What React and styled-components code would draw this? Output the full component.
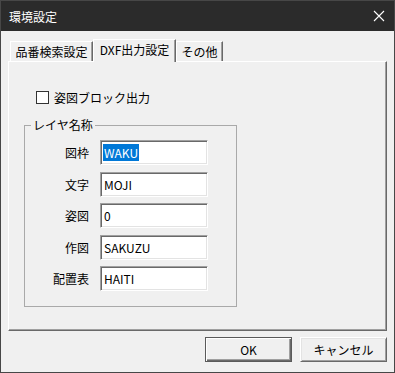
import React from 'react';
import styled, { createGlobalStyle } from 'styled-components';

const GlobalStyle = createGlobalStyle`
  html, body {
    margin: 0;
    padding: 0;
    background: #f0f0f0;
  }
  * { box-sizing: border-box; }
`;

const FONT = `"Noto Sans CJK JP", "Noto Sans", sans-serif`;

const Window = styled.div`
  width: 395px;
  height: 373px;
  border: 1px solid #474747;
  background: #f0f0f0;
  display: flex;
  flex-direction: column;
  font-family: ${FONT};
  font-size: 12px;
  color: #000;
`;

const TitleBar = styled.div`
  height: 30px;
  flex: none;
  background: #2b2b2b;
  color: #fff;
  display: flex;
  align-items: center;
  justify-content: space-between;
  padding: 0 9px 0 8px;
  font-size: 12px;
`;

const CloseButton = styled.div`
  width: 12px;
  height: 12px;
  display: flex;
  align-items: center;
  justify-content: center;
  margin-top: -1px;
`;

const TabStrip = styled.div`
  display: flex;
  align-items: flex-end;
  padding: 8px 0 0 9px;
  margin-bottom: -1px;
`;

const Tab = styled.div`
  width: ${(p) => p.$width}px;
  height: ${(p) => (p.$active ? 23 : 21)}px;
  display: flex;
  justify-content: center;
  padding-top: ${(p) => (p.$active ? 2 : 2)}px;
  background: #f0f0f0;
  border-top: 1px solid #fff;
  border-left: 1px solid #fff;
  border-right: 1px solid #696969;
  box-shadow: inset -1px 0 #a0a0a0;
  white-space: nowrap;
  line-height: 16px;
  position: ${(p) => (p.$active ? 'relative' : 'static')};
  z-index: ${(p) => (p.$active ? 1 : 'auto')};
`;

const Panel = styled.div`
  margin: 0 7px;
  height: 270px;
  flex: none;
  border-top: 1px solid #fff;
  border-left: 1px solid #fff;
  border-right: 1px solid #696969;
  border-bottom: 1px solid #696969;
  box-shadow: inset -1px -1px #a0a0a0;
  padding: 29px 0 0 15px;
`;

const CheckRow = styled.label`
  display: flex;
  align-items: center;
  gap: 5px;
  margin-left: 12px;
  height: 13px;
`;

const CheckBox = styled.span`
  width: 13px;
  height: 13px;
  border: 1px solid #333;
  background: #fff;
  flex: none;
`;

const GroupBox = styled.fieldset`
  width: 213px;
  margin: 13px 0 0 0;
  padding: 7px 0 15px 0;
  border: 1px solid #a9a9a9;
  min-width: 0;
`;

const Legend = styled.legend`
  margin-left: 6px;
  padding: 0 2px;
  line-height: 16px;
`;

const FieldGrid = styled.div`
  display: grid;
  grid-template-columns: 64px 108px;
  grid-auto-rows: 25px;
  column-gap: 11px;
  row-gap: 6.5px;
  align-items: center;
`;

const FieldLabel = styled.span`
  text-align: right;
`;

const TextBox = styled.div`
  height: 25px;
  background: #fff;
  border: 1px solid;
  border-color: #a0a0a0 #fff #fff #a0a0a0;
  box-shadow: inset 1px 1px #696969, inset -1px -1px #e3e3e3;
  display: flex;
  align-items: center;
  padding-left: 2px;
  white-space: nowrap;
`;

const Selected = styled.span`
  background: #0078d7;
  color: #fff;
  line-height: 17px;
  padding: 0 1px;
`;

const Plain = styled.span`
  padding-left: 1px;
`;

const Footer = styled.div`
  display: flex;
  justify-content: flex-end;
  gap: 8px;
  padding: 6px 7px 0 0;
`;

const Button = styled.div`
  width: 87px;
  height: 25px;
  display: flex;
  align-items: center;
  justify-content: center;
  background: #f0f0f0;
  border: 1px solid;
  border-color: ${(p) => (p.$default ? '#5a5a5a' : '#fff #696969 #696969 #fff')};
  box-shadow: ${(p) =>
    p.$default
      ? 'inset 1px 1px #fff, inset -1px -1px #696969, inset -2px -2px #a0a0a0'
      : 'inset 1px 1px #e3e3e3, inset -1px -1px #a0a0a0'};
`;

const fields = [
  { label: '図枠', value: 'WAKU', selected: true },
  { label: '文字', value: 'MOJI' },
  { label: '姿図', value: '0' },
  { label: '作図', value: 'SAKUZU' },
  { label: '配置表', value: 'HAITI' },
];

export default function App() {
  return (
    <>
      <GlobalStyle />
      <Window>
        <TitleBar>
          <span>環境設定</span>
          <CloseButton>
            <svg width="12" height="12" viewBox="0 0 12 12">
              <path d="M1 1 L11 11 M11 1 L1 11" stroke="#fff" strokeWidth="1.1" />
            </svg>
          </CloseButton>
        </TitleBar>
        <TabStrip>
          <Tab $width={83}>品番検索設定</Tab>
          <Tab $width={83} $active>DXF出力設定</Tab>
          <Tab $width={47}>その他</Tab>
        </TabStrip>
        <Panel>
          <CheckRow>
            <CheckBox />
            <span>姿図ブロック出力</span>
          </CheckRow>
          <GroupBox>
            <Legend>レイヤ名称</Legend>
            <FieldGrid>
              {fields.map((f) => (
                <React.Fragment key={f.label}>
                  <FieldLabel>{f.label}</FieldLabel>
                  <TextBox>
                    {f.selected ? <Selected>{f.value}</Selected> : <Plain>{f.value}</Plain>}
                  </TextBox>
                </React.Fragment>
              ))}
            </FieldGrid>
          </GroupBox>
        </Panel>
        <Footer>
          <Button $default>OK</Button>
          <Button>キャンセル</Button>
        </Footer>
      </Window>
    </>
  );
}
